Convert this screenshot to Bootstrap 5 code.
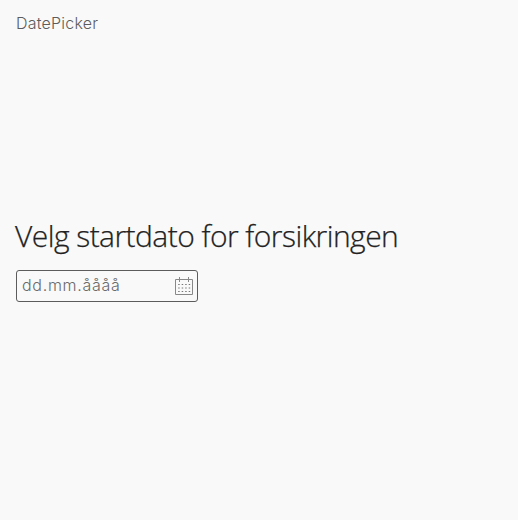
<!DOCTYPE html>
<html lang="nb">
<head>
<meta charset="utf-8">
<meta name="viewport" content="width=device-width, initial-scale=1">
<title>DatePicker</title>
<link href="https://cdn.jsdelivr.net/npm/bootstrap@5.3.0/dist/css/bootstrap.min.css" rel="stylesheet">
<style>
body { background: #f9f9f9; color: #222; font-family: "Open Sans", sans-serif; font-weight: 300; }
.page { height: 520px; padding: 0 16px; }
.story-title { font-family: Inter, sans-serif; font-size: 16px; line-height: 24px; padding-top: 11px; height: 216px; color: #5c5c5c; letter-spacing: .22px; }
.question { font-size: 30px; line-height: 40px; font-weight: 300; letter-spacing: -.55px; -webkit-text-stroke: .25px #222; margin-bottom: 14px; margin-left: -1px; }
.date-field { width: 182px; height: 32px; border: 1px solid #5c5c5c; border-radius: 3px; background: #f9f9f9; padding: 0 4px 0 5px; }
.date-input { width: 130px; height: 28px; font-family: Inter, sans-serif; font-size: 16px; line-height: 28px; font-weight: 300; letter-spacing: .7px; margin-bottom: 2px; }
.date-input::placeholder { color: #6a6a6a; opacity: 1; }
</style>
</head>
<body>
<main class="page d-flex flex-column align-items-start">
  <div class="story-title fw-light text-nowrap">DatePicker</div>
  <label class="question text-nowrap" for="start"><span>Velg startdato for forsikringen</span></label>
  <div class="date-field d-flex align-items-center justify-content-between">
    <input id="start" class="date-input form-control border-0 rounded-0 p-0 bg-transparent shadow-none" type="text" placeholder="dd.mm.åååå">
    <button class="btn p-0 border-0 d-flex" type="button" aria-label="Åpne kalender">
      <svg width="18" height="18" viewBox="0 0 18 18" fill="none" stroke="#888">
        <path d="M.5 2.5h17v15H.5z"/>
        <path d="M4.5 0v5M13.5 0v5"/>
        <path stroke="#777" stroke-dasharray="1.5 2" d="M3.2 7.5h12M3.2 11h12M3.2 14.5h12"/>
      </svg>
    </button>
  </div>
</main>
<script src="https://cdn.jsdelivr.net/npm/bootstrap@5.3.0/dist/js/bootstrap.bundle.min.js"></script>
</body>
</html>
